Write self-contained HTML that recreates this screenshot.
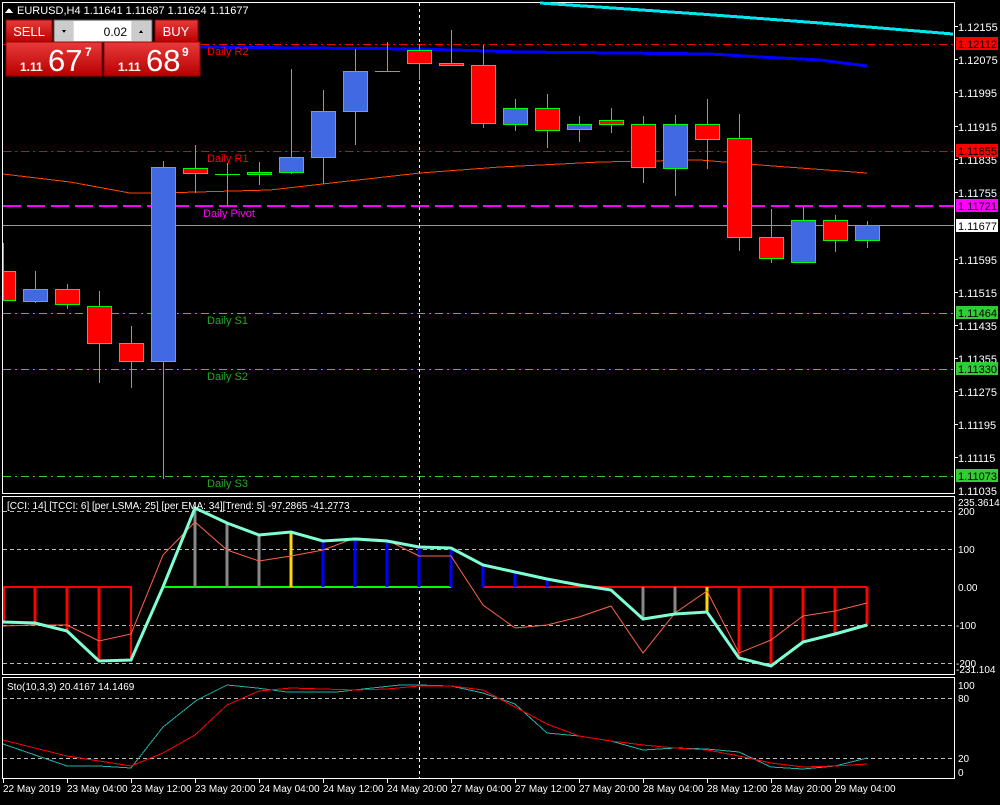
<!DOCTYPE html>
<html><head><meta charset="utf-8"><style>
body{margin:0;background:#000;width:1000px;height:800px;overflow:hidden;font-family:"Liberation Sans",sans-serif}
svg text{font-family:"Liberation Sans",sans-serif}
</style></head><body>
<svg width="1000" height="800" viewBox="0 0 1000 800" xmlns="http://www.w3.org/2000/svg" shape-rendering="crispEdges">
<rect width="1000" height="800" fill="#000"/>
<!-- frames -->
<g fill="none" stroke="#fff" stroke-width="1">
<rect x="2.5" y="2.5" width="952" height="491"/>
<rect x="2.5" y="496.5" width="952" height="178"/>
<rect x="2.5" y="677.5" width="952" height="101"/>
</g>
<!-- level lines main -->
<g stroke-width="1">
<line x1="3" y1="44.5" x2="954" y2="44.5" stroke="#f00" stroke-dasharray="8,4,2,4"/>
<line x1="3" y1="151.5" x2="954" y2="151.5" stroke="#e00" stroke-dasharray="8,4,2,4"/>
<line x1="3" y1="206" x2="954" y2="206" stroke="#f0f" stroke-width="2" stroke-dasharray="18,6"/>
<line x1="3" y1="225.5" x2="954" y2="225.5" stroke="#999"/>
<line x1="3" y1="313.5" x2="954" y2="313.5" stroke="#3c3" stroke-dasharray="8,4,2,4"/>
<line x1="3" y1="369.5" x2="954" y2="369.5" stroke="#3c3" stroke-dasharray="8,4,2,4"/>
<line x1="3" y1="476.5" x2="954" y2="476.5" stroke="#3c3" stroke-dasharray="8,4,2,4"/>
<line x1="419.5" y1="3" x2="419.5" y2="779" stroke="#fff" stroke-dasharray="3,3"/>
</g>
<!-- MAs -->
<polyline fill="none" stroke="#0000ff" stroke-width="3" points="200,47 300,48 420,49 520,52 620,53 710,54 760,57 820,60 867,66"/>
<polyline fill="none" stroke="#00e5ee" stroke-width="3" points="540,3 700,14 820,23 953,34"/>
<polyline fill="none" stroke="#ff4500" stroke-width="1" points="3,174 70,182 130,193 160,193 270,190 340,182 420,173 500,167 600,162 700,160 760,165 867,173"/>
<text x="207" y="55" fill="#f00" font-size="11">Daily R2</text>
<text x="207" y="162" fill="#f00" font-size="11">Daily R1</text>
<text x="203" y="217" fill="#f0f" font-size="11">Daily Pivot</text>
<text x="207" y="324" fill="#2a2" font-size="11">Daily S1</text>
<text x="207" y="380" fill="#2a2" font-size="11">Daily S2</text>
<text x="207" y="487" fill="#2a2" font-size="11">Daily S3</text>
<!-- candles -->
<g stroke="#00ff00" stroke-width="1">
<line x1="3.5" y1="243" x2="3.5" y2="300"/><rect x="3.5" y="271.5" width="12" height="29" fill="#f00"/>
<line x1="35.5" y1="271" x2="35.5" y2="303"/><rect x="23.5" y="289.5" width="24" height="12" fill="#4169e1"/>
<line x1="67.5" y1="284" x2="67.5" y2="309"/><rect x="55.5" y="289.5" width="24" height="15" fill="#f00"/>
<line x1="99.5" y1="291" x2="99.5" y2="383"/><rect x="87.5" y="306.5" width="24" height="37" fill="#f00"/>
<line x1="131.5" y1="326" x2="131.5" y2="388"/><rect x="119.5" y="343.5" width="24" height="18" fill="#f00"/>
<line x1="163.5" y1="161" x2="163.5" y2="479"/><rect x="151.5" y="167.5" width="24" height="194" fill="#4169e1"/>
<line x1="195.5" y1="145" x2="195.5" y2="193"/><rect x="183.5" y="168.5" width="24" height="5" fill="#f00"/>
<line x1="227.5" y1="163" x2="227.5" y2="206"/><line x1="215" y1="174.5" x2="240" y2="174.5"/>
<line x1="259.5" y1="162" x2="259.5" y2="185"/><rect x="247.5" y="172.5" width="24" height="2" fill="#f00"/>
<line x1="291.5" y1="69" x2="291.5" y2="174"/><rect x="279.5" y="157.5" width="24" height="15" fill="#4169e1"/>
<line x1="323.5" y1="90" x2="323.5" y2="184"/><rect x="311.5" y="111.5" width="24" height="46" fill="#4169e1"/>
<line x1="355.5" y1="49" x2="355.5" y2="145"/><rect x="343.5" y="71.5" width="24" height="40" fill="#4169e1"/>
<line x1="387.5" y1="42" x2="387.5" y2="72"/><line x1="375" y1="71.5" x2="400" y2="71.5"/>
<line x1="419.5" y1="44" x2="419.5" y2="80"/><rect x="407.5" y="50.5" width="24" height="13" fill="#f00"/>
<line x1="451.5" y1="30" x2="451.5" y2="66"/><rect x="439.5" y="63.5" width="24" height="2" fill="#f00"/>
<line x1="483.5" y1="45" x2="483.5" y2="128"/><rect x="471.5" y="65.5" width="24" height="58" fill="#f00"/>
<line x1="515.5" y1="99" x2="515.5" y2="131"/><rect x="503.5" y="108.5" width="24" height="16" fill="#4169e1"/>
<line x1="547.5" y1="94" x2="547.5" y2="148"/><rect x="535.5" y="108.5" width="24" height="22" fill="#f00"/>
<line x1="579.5" y1="116" x2="579.5" y2="142"/><rect x="567.5" y="124.5" width="24" height="5" fill="#4169e1"/>
<line x1="611.5" y1="108" x2="611.5" y2="133"/><rect x="599.5" y="120.5" width="24" height="4" fill="#f00"/>
<line x1="643.5" y1="116" x2="643.5" y2="183"/><rect x="631.5" y="124.5" width="24" height="43" fill="#f00"/>
<line x1="675.5" y1="115" x2="675.5" y2="196"/><rect x="663.5" y="124.5" width="24" height="44" fill="#4169e1"/>
<line x1="707.5" y1="99" x2="707.5" y2="169"/><rect x="695.5" y="124.5" width="24" height="15" fill="#f00"/>
<line x1="739.5" y1="114" x2="739.5" y2="251"/><rect x="727.5" y="138.5" width="24" height="99" fill="#f00"/>
<line x1="771.5" y1="209" x2="771.5" y2="263"/><rect x="759.5" y="237.5" width="24" height="21" fill="#f00"/>
<line x1="803.5" y1="207" x2="803.5" y2="262"/><rect x="791.5" y="220.5" width="24" height="42" fill="#4169e1"/>
<line x1="835.5" y1="215" x2="835.5" y2="252"/><rect x="823.5" y="220.5" width="24" height="20" fill="#f00"/>
<line x1="867.5" y1="221" x2="867.5" y2="248"/><rect x="855.5" y="225.5" width="24" height="15" fill="#4169e1"/>
</g>
<!-- right axis main -->
<g fill="#fff" font-size="11">
<text x="958" y="31">1.12155</text><text x="958" y="64">1.12075</text><text x="958" y="97">1.11995</text>
<text x="958" y="131">1.11915</text><text x="958" y="164">1.11835</text><text x="958" y="197">1.11755</text>
<text x="958" y="264">1.11595</text><text x="958" y="297">1.11515</text><text x="958" y="330">1.11435</text>
<text x="958" y="363">1.11355</text><text x="958" y="396">1.11275</text><text x="958" y="429">1.11195</text>
<text x="958" y="462">1.11115</text><text x="958" y="495">1.11035</text>
</g>
<g fill="#fff" stroke="none"><rect x="955" y="26" width="3" height="1"/><rect x="955" y="59" width="3" height="1"/><rect x="955" y="92" width="3" height="1"/><rect x="955" y="126" width="3" height="1"/><rect x="955" y="159" width="3" height="1"/><rect x="955" y="192" width="3" height="1"/><rect x="955" y="259" width="3" height="1"/><rect x="955" y="292" width="3" height="1"/><rect x="955" y="325" width="3" height="1"/><rect x="955" y="358" width="3" height="1"/><rect x="955" y="391" width="3" height="1"/><rect x="955" y="424" width="3" height="1"/><rect x="955" y="457" width="3" height="1"/></g>
<g font-size="11">
<rect x="956" y="37" width="42" height="13" fill="#f00"/><text x="958" y="48" fill="#000">1.12112</text>
<rect x="956" y="144" width="42" height="13" fill="#f00"/><text x="958" y="155" fill="#000">1.11855</text>
<rect x="956" y="199" width="42" height="13" fill="#f0f"/><text x="958" y="210" fill="#000">1.11721</text>
<rect x="956" y="219" width="42" height="13" fill="#fff"/><text x="958" y="230" fill="#000">1.11677</text>
<rect x="956" y="306" width="42" height="13" fill="#32cd32"/><text x="958" y="317" fill="#000">1.11464</text>
<rect x="956" y="362" width="42" height="13" fill="#32cd32"/><text x="958" y="373" fill="#000">1.11330</text>
<rect x="956" y="469" width="42" height="13" fill="#32cd32"/><text x="958" y="480" fill="#000">1.11073</text>
</g>
<!-- title -->
<path d="M5 13 L9 8 L13 13 Z" fill="#fff"/>
<text x="17" y="14" fill="#fff" font-size="11">EURUSD,H4  1.11641 1.11687 1.11624 1.11677</text>
<!-- trade panel -->
<defs><linearGradient id="rg" x1="0" y1="0" x2="0" y2="1"><stop offset="0" stop-color="#e83a3a"/><stop offset="1" stop-color="#b80000"/></linearGradient></defs>
<rect x="6" y="20" width="46" height="22" fill="url(#rg)" stroke="#900"/>
<text x="29" y="36" fill="#fff" font-size="13" text-anchor="middle">SELL</text>
<rect x="54" y="20" width="98" height="22" fill="#ddd" stroke="#555"/>
<rect x="55" y="21" width="18" height="20" fill="#ccc"/><rect x="132" y="21" width="19" height="20" fill="#ccc"/>
<rect x="74" y="21" width="57" height="20" fill="#fff"/>
<path d="M62 30 L66 30 L64 33Z" fill="#000"/><path d="M139 33 L143 33 L141 30Z" fill="#000"/>
<text x="127" y="36" fill="#000" font-size="12" text-anchor="end">0.02</text>
<rect x="155" y="20" width="43" height="22" fill="url(#rg)" stroke="#900"/>
<text x="176" y="36" fill="#fff" font-size="13" text-anchor="middle">BUY</text>
<rect x="6" y="42" width="96" height="34" fill="url(#rg)" stroke="#900"/>
<rect x="104" y="42" width="96" height="34" fill="url(#rg)" stroke="#900"/>
<text x="20" y="71" fill="#fff" font-size="12" font-weight="bold">1.11</text>
<text x="48" y="71" fill="#fff" font-size="31">67</text>
<text x="85" y="56" fill="#fff" font-size="12" font-weight="bold">7</text>
<text x="118" y="71" fill="#fff" font-size="12" font-weight="bold">1.11</text>
<text x="146" y="71" fill="#fff" font-size="31">68</text>
<text x="182" y="56" fill="#fff" font-size="12" font-weight="bold">9</text>
<!-- CCI panel -->
<g stroke="#bbb" stroke-dasharray="4,3"><line x1="3" y1="511.5" x2="954" y2="511.5"/><line x1="3" y1="549.5" x2="954" y2="549.5"/><line x1="3" y1="625.5" x2="954" y2="625.5"/><line x1="3" y1="663.5" x2="954" y2="663.5"/></g>
<line x1="163" y1="587" x2="451" y2="587" stroke="#00ff00" stroke-width="2"/>
<polyline fill="none" stroke="#f00" stroke-width="2" points="4,622 4,587 131,587 131,660"/>
<line x1="483" y1="587" x2="867" y2="587" stroke="#f00" stroke-width="2"/>
<g stroke-width="3">
<line x1="35" y1="587" x2="35" y2="623" stroke="#f00"/><line x1="67" y1="587" x2="67" y2="631" stroke="#f00"/><line x1="99" y1="587" x2="99" y2="661" stroke="#f00"/>
<line x1="195" y1="587" x2="195" y2="510" stroke="#888"/><line x1="227" y1="587" x2="227" y2="523" stroke="#888"/><line x1="259" y1="587" x2="259" y2="535" stroke="#888"/>
<line x1="291" y1="587" x2="291" y2="532" stroke="#ffd700"/>
<line x1="323" y1="587" x2="323" y2="541" stroke="#00f"/><line x1="355" y1="587" x2="355" y2="539" stroke="#00f"/><line x1="387" y1="587" x2="387" y2="541" stroke="#00f"/><line x1="419" y1="587" x2="419" y2="548" stroke="#00f"/><line x1="451" y1="587" x2="451" y2="550" stroke="#00f"/><line x1="483" y1="587" x2="483" y2="565" stroke="#00f"/><line x1="515" y1="587" x2="515" y2="572" stroke="#00f"/><line x1="547" y1="587" x2="547" y2="580" stroke="#00f"/>
<line x1="643" y1="587" x2="643" y2="619" stroke="#888"/><line x1="675" y1="587" x2="675" y2="614" stroke="#888"/>
<line x1="707" y1="587" x2="707" y2="612" stroke="#ffd700"/>
<line x1="739" y1="587" x2="739" y2="658" stroke="#f00"/><line x1="771" y1="587" x2="771" y2="666" stroke="#f00"/><line x1="803" y1="587" x2="803" y2="642" stroke="#f00"/><line x1="835" y1="587" x2="835" y2="634" stroke="#f00"/><line x1="867" y1="587" x2="867" y2="625" stroke="#f00"/>
</g>
<polyline fill="none" stroke="#ff6347" stroke-width="1" shape-rendering="auto" points="3,626 35,625 67,625 99,641 131,634 163,555 195,522 227,550 259,561 291,556 323,550 355,538 387,540 419,556 451,556 483,605 515,628 547,625 579,617 611,606 643,653 675,613 707,591 739,653 771,640 803,616 835,611 867,603"/>
<polyline fill="none" stroke="#7fffd4" stroke-width="3" shape-rendering="auto" points="3,622 35,623 67,631 99,661 131,660 163,587 195,508 227,523 259,535 291,532 323,541 355,539 387,541 419,547 451,548 483,565 515,572 547,579 579,585 611,590 643,619 675,614 707,612 739,658 771,666 803,642 835,634 867,625"/>
<text x="7" y="509" fill="#fff" font-size="10">[CCI: 14] [TCCI: 6] [per LSMA: 25] [per EMA: 34][Trend: 5]  -97.2865 -41.2773</text>
<g fill="#fff" font-size="10">
<text x="958" y="506">235.3614</text><text x="958" y="515">200</text><text x="958" y="553">100</text><text x="958" y="591">0.00</text><text x="956" y="629">-100</text><text x="956" y="667">-200</text><text x="956" y="673">-231.104</text>
</g>
<!-- Sto panel -->
<g stroke="#bbb" stroke-dasharray="4,3"><line x1="3" y1="698.5" x2="954" y2="698.5"/><line x1="3" y1="758.5" x2="954" y2="758.5"/></g>
<polyline fill="none" stroke="#20b2aa" stroke-width="1" points="3,744 67,766 99,766 131,768 163,727 197,700 227,685 257,688 287,692 337,692 363,689 400,685 419,685 451,686 483,693 515,704 547,733 579,736 611,741 643,750 675,748 707,749 739,752 771,767 803,769 835,766 867,758"/>
<polyline fill="none" stroke="#f00" stroke-width="1" points="3,740 67,756 99,761 131,766 163,753 195,735 227,705 259,691 291,688 323,689 355,690 387,689 419,686 451,686 483,690 515,707 547,724 579,736 611,741 643,745 675,748 707,750 739,756 771,763 803,767 835,766 867,764"/>
<text x="7" y="690" fill="#fff" font-size="10">Sto(10,3,3) 20.4167 14.1469</text>
<g fill="#fff" font-size="10"><text x="958" y="689">100</text><text x="958" y="702">80</text><text x="958" y="762">20</text><text x="958" y="776">0</text></g>
<!-- time axis -->
<g stroke="#fff"><line x1="3.5" y1="779" x2="3.5" y2="783"/><line x1="67.5" y1="779" x2="67.5" y2="783"/><line x1="131.5" y1="779" x2="131.5" y2="783"/><line x1="195.5" y1="779" x2="195.5" y2="783"/><line x1="259.5" y1="779" x2="259.5" y2="783"/><line x1="323.5" y1="779" x2="323.5" y2="783"/><line x1="387.5" y1="779" x2="387.5" y2="783"/><line x1="451.5" y1="779" x2="451.5" y2="783"/><line x1="515.5" y1="779" x2="515.5" y2="783"/><line x1="579.5" y1="779" x2="579.5" y2="783"/><line x1="643.5" y1="779" x2="643.5" y2="783"/><line x1="707.5" y1="779" x2="707.5" y2="783"/><line x1="771.5" y1="779" x2="771.5" y2="783"/><line x1="835.5" y1="779" x2="835.5" y2="783"/></g>
<g fill="#fff" font-size="10">
<text x="3" y="792">22 May 2019</text><text x="67" y="792">23 May 04:00</text><text x="131" y="792">23 May 12:00</text><text x="195" y="792">23 May 20:00</text><text x="259" y="792">24 May 04:00</text><text x="323" y="792">24 May 12:00</text><text x="387" y="792">24 May 20:00</text><text x="451" y="792">27 May 04:00</text><text x="515" y="792">27 May 12:00</text><text x="579" y="792">27 May 20:00</text><text x="643" y="792">28 May 04:00</text><text x="707" y="792">28 May 12:00</text><text x="771" y="792">28 May 20:00</text><text x="835" y="792">29 May 04:00</text>
</g>
</svg>
</body></html>
